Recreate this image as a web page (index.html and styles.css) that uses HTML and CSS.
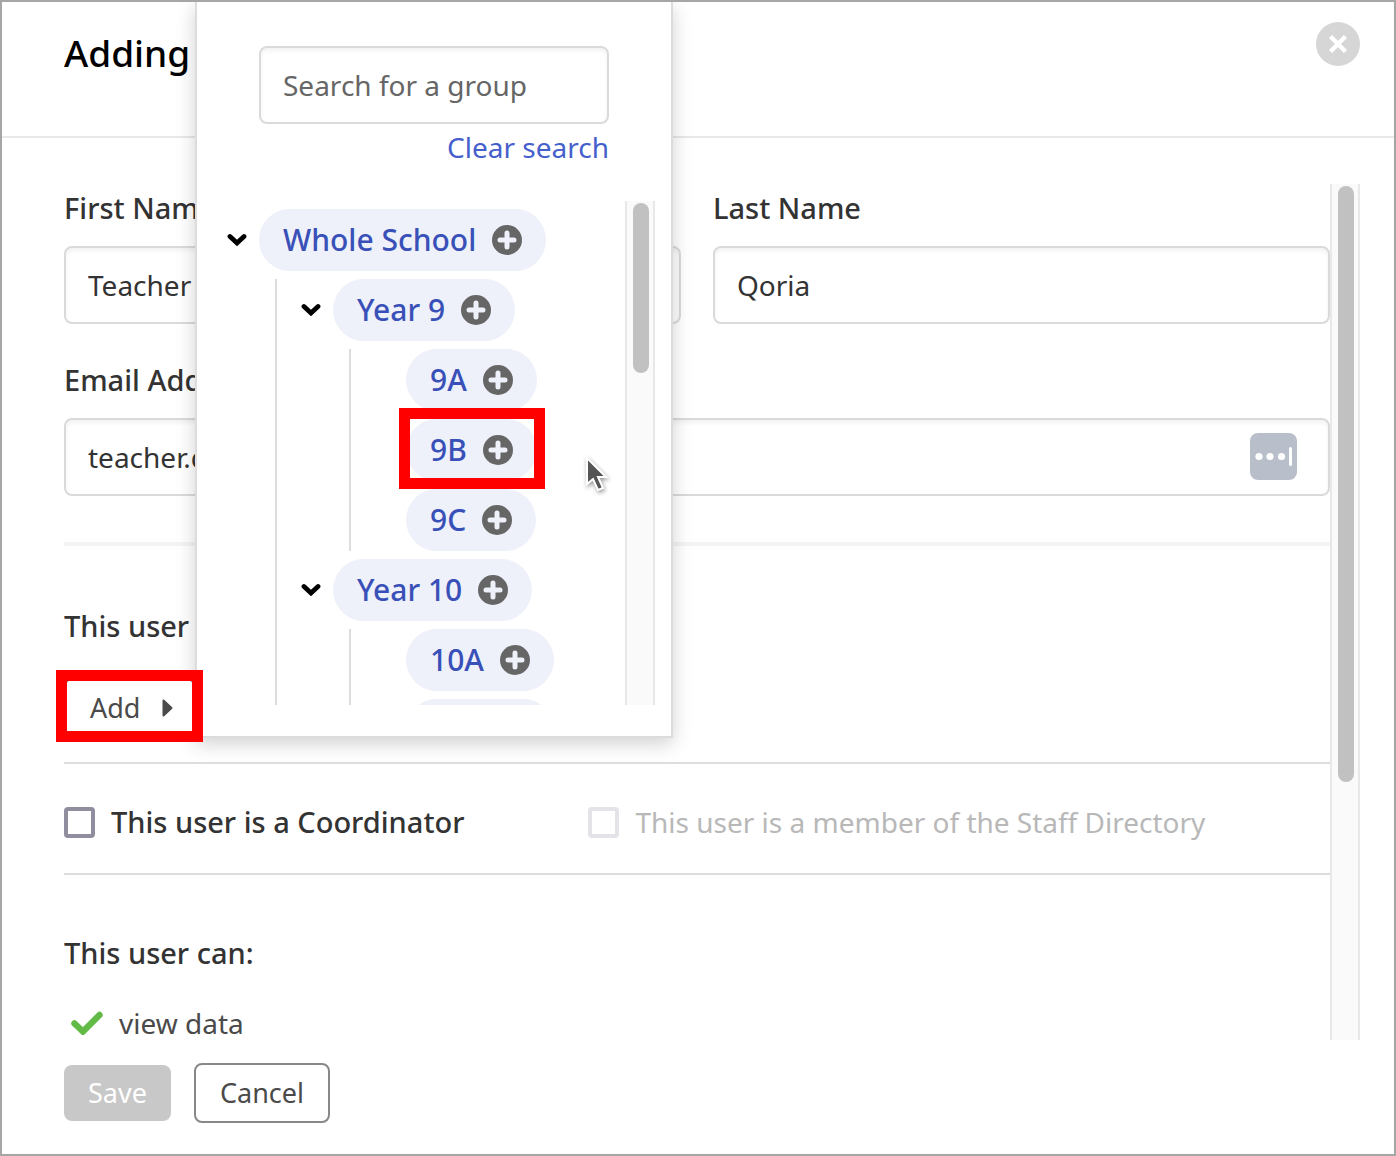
FILE: index.html
```html
<!DOCTYPE html>
<html lang="en">
<head>
  <meta charset="UTF-8">
  <meta name="viewport" content="width=device-width, initial-scale=1.0">
  <title>Adding</title>
  <link rel="stylesheet" href="styles.css">
</head>
<body>
  <!-- icons reused across the page -->
  <svg width="0" height="0" class="sprite" aria-hidden="true">
    <symbol id="icon-plus" viewBox="0 0 30 30">
      <circle cx="15" cy="15" r="15" fill="#666"/>
      <path d="M15 8v14M8 15h14" stroke="#eef0fa" stroke-width="5" stroke-linecap="round"/>
      <path d="M15 7v16M7 15h16" stroke="#eef0fa" stroke-width="4"/>
    </symbol>
    <symbol id="icon-chevron" viewBox="0 0 20 14">
      <path d="M3 3.500 10 10l7-6.500" fill="none" stroke="#000" stroke-width="4.800" stroke-linecap="round"/>
    </symbol>
  </svg>

  <div class="dialog">
    <header class="dialog-header">
      <h1>Adding</h1>
      <button type="button" class="close-btn" aria-label="Close">
        <svg width="18" height="18" viewBox="0 0 18 18"><path d="M1.500 1.500l15 15M16.500 1.500l-15 15" stroke="#fff" stroke-width="4.400"/></svg>
      </button>
    </header>

    <div class="dialog-body">
      <form class="form" id="userForm">
        <div class="name-row">
          <div class="field">
            <label for="firstName">First Name</label>
            <input type="text" id="firstName" class="text-input" value="Teacher">
          </div>
          <div class="field">
            <label for="lastName">Last Name</label>
            <input type="text" id="lastName" class="text-input" value="Qoria">
          </div>
        </div>

        <div class="field email-field">
          <label for="email">Email Address</label>
          <div class="input-wrap">
            <input type="text" id="email" class="text-input" value="teacher.qoria">
            <svg class="autofill-icon" width="47" height="47" viewBox="0 0 47 47" aria-hidden="true">
              <rect width="47" height="47" rx="8" fill="#b8bfcb"/>
              <circle cx="9" cy="23.500" r="3.600" fill="#fff"/>
              <circle cx="20" cy="23.500" r="3.600" fill="#fff"/>
              <circle cx="31.500" cy="23.500" r="3.600" fill="#fff"/>
              <rect x="39" y="14" width="3" height="19" rx="1.500" fill="#fff"/>
            </svg>
          </div>
        </div>

        <section class="groups">
          <h2>This user</h2>
          <div class="callout add-callout">
            <button type="button" class="btn add-btn">Add
              <svg width="11" height="18" viewBox="0 0 11 18"><path d="M1.500 1.500v15L9.500 9z" fill="#4a4a4a" stroke="#4a4a4a" stroke-width="2" stroke-linejoin="round"/></svg>
            </button>
          </div>
        </section>

        <div class="roles">
          <label class="check"><input type="checkbox"> This user is a Coordinator</label>
          <label class="check check-disabled"><input type="checkbox" disabled> This user is a member of the Staff Directory</label>
        </div>

        <section class="permissions">
          <h2>This user can:</h2>
          <ul>
            <li>
              <svg width="32" height="24" viewBox="0 0 32 24" aria-hidden="true"><path d="M3.500 12.500l8.500 8L28.500 4" fill="none" stroke="#62bb46" stroke-width="6.400" stroke-linecap="round"/></svg>
              view data
            </li>
          </ul>
        </section>
      </form>
      <div class="scrollbar" aria-hidden="true"><div class="thumb form-thumb"></div></div>
    </div>

    <footer class="dialog-footer">
      <button type="submit" form="userForm" class="btn save-btn" disabled>Save</button>
      <button type="button" class="btn">Cancel</button>
    </footer>

    <div class="group-picker">
      <div class="search">
        <input type="text" class="text-input" placeholder="Search for a group" aria-label="Search for a group">
        <a href="#">Clear search</a>
      </div>
      <div class="tree-area">
        <ul class="tree">
          <li>
            <div class="node">
              <button type="button" class="toggle" aria-label="Collapse Whole School"><svg width="20" height="14"><use href="#icon-chevron"/></svg></button>
              <button type="button" class="pill">Whole School <svg width="30" height="30"><use href="#icon-plus"/></svg></button>
            </div>
            <ul>
              <li>
                <div class="node">
                  <button type="button" class="toggle" aria-label="Collapse Year 9"><svg width="20" height="14"><use href="#icon-chevron"/></svg></button>
                  <button type="button" class="pill">Year 9 <svg width="30" height="30"><use href="#icon-plus"/></svg></button>
                </div>
                <ul>
                  <li class="node leaf"><button type="button" class="pill">9A <svg width="30" height="30"><use href="#icon-plus"/></svg></button></li>
                  <li class="node leaf">
                    <div class="callout pill-callout">
                      <button type="button" class="pill">9B <svg width="30" height="30"><use href="#icon-plus"/></svg></button>
                    </div>
                  </li>
                  <li class="node leaf"><button type="button" class="pill">9C <svg width="30" height="30"><use href="#icon-plus"/></svg></button></li>
                </ul>
              </li>
              <li>
                <div class="node">
                  <button type="button" class="toggle" aria-label="Collapse Year 10"><svg width="20" height="14"><use href="#icon-chevron"/></svg></button>
                  <button type="button" class="pill">Year 10 <svg width="30" height="30"><use href="#icon-plus"/></svg></button>
                </div>
                <ul>
                  <li class="node leaf"><button type="button" class="pill">10A <svg width="30" height="30"><use href="#icon-plus"/></svg></button></li>
                  <li class="node leaf"><button type="button" class="pill pill-loading" aria-label="Next group"></button></li>
                </ul>
              </li>
            </ul>
          </li>
        </ul>
        <div class="scrollbar" aria-hidden="true"><div class="thumb tree-thumb"></div></div>
      </div>
      <svg class="cursor" width="26" height="38" viewBox="0 0 26 38" aria-hidden="true">
        <path d="M2 2v26l6-5 5 11 5-2-5-11h8z" fill="#555" stroke="#fff" stroke-width="2"/>
      </svg>
    </div>
  </div>
</body>
</html>
```
FILE: styles.css
```css
:root {
  --text: #333;
  --text-mid: #4a4a4a;
  --line: #ddd;
  --link: #3850b7;
  --pill: #eef0fa;
  --mark: #fe0000;
}

* {
  box-sizing: border-box;
}

body {
  margin: 0;
  font-family: "Noto Sans", "Open Sans", sans-serif;
  font-size: 28px;
  line-height: 40px;
  color: var(--text);
  background: #fff;
}

h1, h2, ul {
  margin: 0;
  padding: 0;
}

h1 {
  font-size: 37px;
  font-weight: 500;
  line-height: 52px;
  color: #000;
}

h2 {
  font-size: 29px;
  font-weight: 500;
}

ul {
  list-style: none;
}

button, input {
  font: inherit;
  color: inherit;
}

button {
  border: 0;
  padding: 0;
  background: none;
  cursor: pointer;
}

svg {
  display: block;
  flex: none;
}

.sprite {
  position: absolute;
}

.dialog {
  position: relative;
  display: flex;
  flex-direction: column;
  height: 100vh;
  border: 2px solid #a6a6a6;
  overflow: hidden;
}

.dialog-header {
  display: flex;
  justify-content: space-between;
  align-items: flex-start;
  height: 136px;
  padding: 20px 34px 0 62px;
  border-bottom: 2px solid #e8e8e8;
}

.dialog-header h1 {
  padding-top: 5px;
}

.close-btn {
  display: flex;
  align-items: center;
  justify-content: center;
  width: 44px;
  height: 44px;
  border-radius: 50%;
  background: #d6d6d6;
}

.dialog-body {
  display: flex;
  flex: 1;
  min-height: 0;
  margin: 46px 34px 0 50px;
}

.form {
  flex: 1;
  min-width: 0;
  overflow: hidden;
  padding: 4px 0 0 12px;
}

.name-row {
  display: grid;
  grid-template-columns: 1fr 1fr;
  gap: 32px;
}

.field label {
  display: block;
  margin-bottom: 18px;
  font-size: 29px;
  font-weight: 500;
}

.text-input {
  display: block;
  width: 100%;
  height: 78px;
  padding: 0 22px;
  border: 2px solid #dadada;
  border-radius: 8px;
  background: #fff;
  box-shadow: inset 0 3px 4px rgba(0, 0, 0, 0.05);
}

.text-input::placeholder {
  color: #666;
  opacity: 1;
}

.email-field {
  padding: 36px 0 46px;
  border-bottom: 4px solid #f4f4f4;
}

.input-wrap {
  position: relative;
}

.autofill-icon {
  position: absolute;
  top: 15px;
  right: 33px;
}

.groups {
  padding: 60px 0 24px;
  border-bottom: 2px solid var(--line);
}

.callout {
  position: relative;
  z-index: 3;
  width: max-content;
}

.callout::after {
  content: "";
  position: absolute;
  border: 11px solid var(--mark);
  pointer-events: none;
}

.add-callout {
  margin-top: 32px;
}

.add-callout::after {
  inset: -8px -8px -4px;
}

.btn {
  display: flex;
  align-items: center;
  height: 60px;
  padding: 0 24px;
  border: 2px solid #888;
  border-radius: 8px;
  background: #fff;
  font-size: 27px;
  color: var(--text-mid);
}

.add-btn {
  gap: 22px;
  padding-right: 20px;
}

.roles {
  display: flex;
  gap: 124px;
  padding: 38px 0 31px;
  border-bottom: 2px solid var(--line);
}

.check {
  display: flex;
  align-items: center;
  gap: 16px;
  font-size: 29px;
  font-weight: 500;
}

.check input {
  appearance: none;
  width: 31px;
  height: 31px;
  margin: 0;
  border: 4px solid #8f8d9e;
  border-radius: 4px;
}

.check-disabled {
  font-size: 28px;
  font-weight: 400;
  color: #b8b8b8;
}

.check-disabled input {
  border-color: #e3e3e8;
}

.permissions {
  padding-top: 58px;
}

.permissions li {
  display: flex;
  align-items: center;
  gap: 16px;
  padding: 30px 0 0 7px;
  color: var(--text-mid);
}

.scrollbar {
  flex: none;
  width: 30px;
  padding: 2px 4px 2px 6px;
  border: solid #e8e8e8;
  border-width: 0 2px;
  background: #fafafa;
}

.thumb {
  border-radius: 8px;
  background: #c1c1c1;
}

.form-thumb {
  height: 70%;
}

.tree-thumb {
  height: 34%;
}

.dialog-footer {
  display: flex;
  align-items: center;
  gap: 23px;
  padding: 23px 62px 31px;
}

.save-btn {
  height: 56px;
  border: 0;
  background: #c8c8c8;
  color: #fff;
}

/* group picker, opened from the Add button */
.group-picker {
  position: absolute;
  top: 0;
  left: 193px;
  z-index: 2;
  width: 478px;
  padding: 44px 16px 31px 17px;
  border: 2px solid #dcdcdc;
  border-top: 0;
  background: #fff;
  box-shadow: 0 6px 18px rgba(0, 0, 0, 0.18);
}

.search {
  margin: 0 46px 34px 45px;
}

.search a {
  display: block;
  margin-top: 3px;
  text-align: right;
  text-decoration: none;
  color: #4560cc;
}

.tree-area {
  display: flex;
  height: 504px;
}

.tree {
  flex: 1;
  overflow: hidden;
  padding-top: 8px;
}

.tree ul {
  display: grid;
  gap: 8px;
  margin: 8px 0 0 61px;
  padding-left: 11px;
  border-left: 2px solid var(--line);
}

.node {
  display: flex;
}

.tree .leaf {
  padding-left: 44px;
}

.toggle {
  display: flex;
  align-items: center;
  justify-content: center;
  width: 45px;
}

.pill {
  display: flex;
  align-items: center;
  gap: 16px;
  height: 62px;
  padding: 0 24px;
  border-radius: 31px;
  background: var(--pill);
  color: var(--link);
  font-size: 30px;
  font-weight: 500;
}

.pill-loading {
  width: 148px;
}

.pill-callout::after {
  inset: -11px -8px -8px -7px;
}

.cursor {
  position: absolute;
  top: 454px;
  left: 388px;
  filter: drop-shadow(1px 2px 2px rgba(0, 0, 0, 0.4));
}
```
